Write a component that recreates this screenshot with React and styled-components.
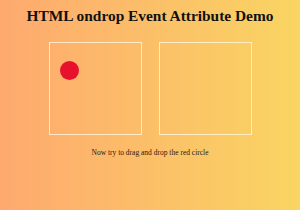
import React from 'react';
import styled, { createGlobalStyle } from 'styled-components';

const GlobalStyle = createGlobalStyle`
  html, body {
    margin: 0;
    padding: 0;
  }
  body {
    width: 300px;
    height: 210px;
    overflow: hidden;
    font-family: "Liberation Serif", "Times New Roman", serif;
    background: linear-gradient(to right, #fea96f, #f9d562);
  }
`;

const Page = styled.div`
  width: 300px;
  height: 210px;
  display: flex;
  flex-direction: column;
  align-items: center;
`;

const Title = styled.h1`
  margin: 7px 0 0;
  font-size: 15.4px;
  font-weight: bold;
  color: #111;
  line-height: 18px;
`;

const Zones = styled.div`
  display: flex;
  gap: 17px;
  margin-top: 17px;
`;

const DropZone = styled.div`
  box-sizing: border-box;
  width: 93px;
  height: 93px;
  border: 1.3px solid rgba(255, 246, 225, 0.8);
  padding: ${p => (p.$filled ? '18px 0 0 10px' : '0')};
`;

const Circle = styled.div`
  width: 19px;
  height: 19px;
  border-radius: 50%;
  background: #e8112d;
`;

const Hint = styled.p`
  margin: 13px 0 0;
  font-size: 7.5px;
  color: #2a1a10;
`;

export default function App() {
  return (
    <Page>
      <GlobalStyle />
      <Title>HTML ondrop Event Attribute Demo</Title>
      <Zones>
        <DropZone $filled>
          <Circle draggable />
        </DropZone>
        <DropZone />
      </Zones>
      <Hint>Now try to drag and drop the red circle</Hint>
    </Page>
  );
}
